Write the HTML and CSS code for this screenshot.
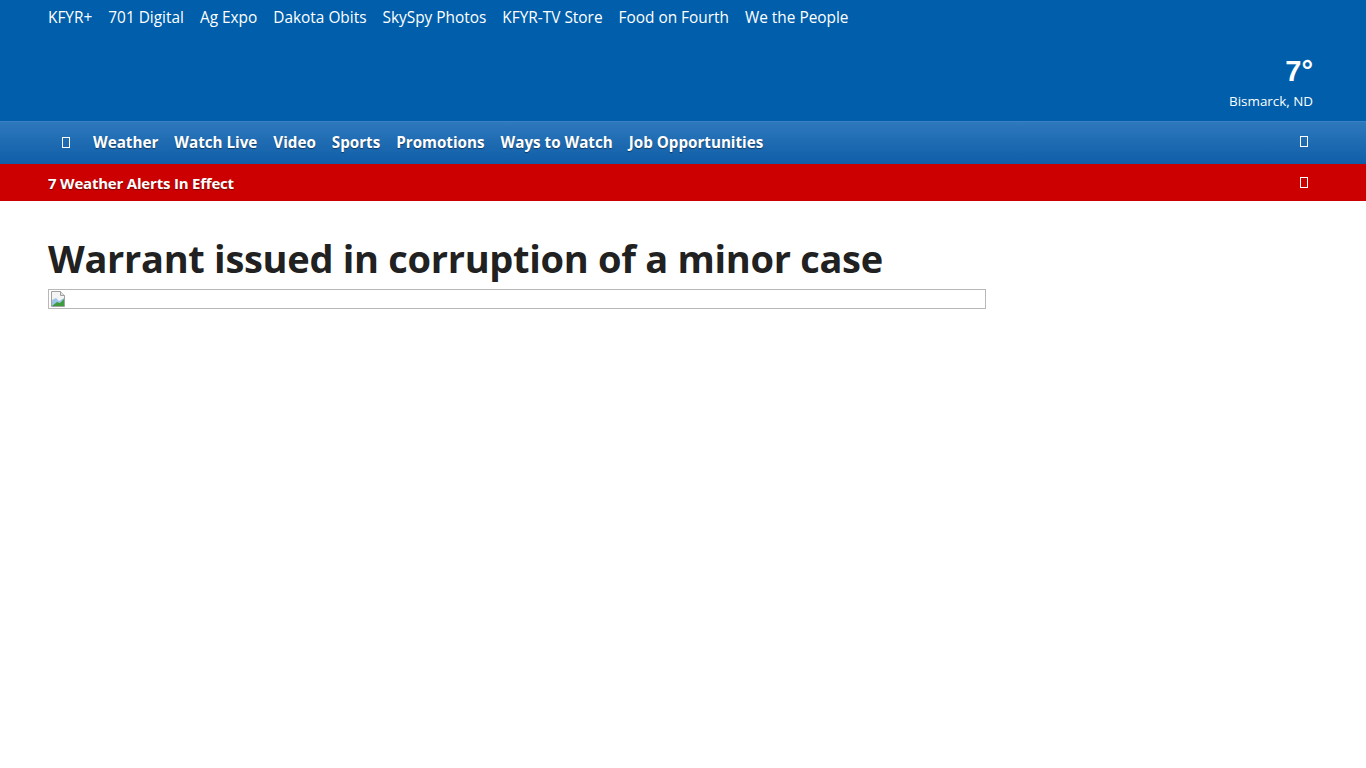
FILE: index.html
```html
<!DOCTYPE html>
<html>
<head>
<meta charset="utf-8">
<link rel="stylesheet" href="styles.css">
</head>
<body>
<header class="masthead">
  <nav class="toplinks">
    <a>KFYR+</a><a>701 Digital</a><a>Ag Expo</a><a>Dakota Obits</a><a>SkySpy Photos</a><a>KFYR-TV Store</a><a>Food on Fourth</a><a>We the People</a>
  </nav>
  <div class="weather">
    <div class="temp">7°</div>
    <div class="city">Bismarck, ND</div>
  </div>
</header>
<nav class="mainnav">
  <div class="navlinks">
    <span class="tofu"></span>
    <a>Weather</a><a>Watch Live</a><a>Video</a><a>Sports</a><a>Promotions</a><a>Ways to Watch</a><a>Job Opportunities</a>
  </div>
  <span class="tofu tofu-right"></span>
</nav>
<div class="alerts">
  <span class="alert-text">7 Weather Alerts In Effect</span>
  <span class="tofu"></span>
</div>
<main class="article">
  <h1>Warrant issued in corruption of a minor case</h1>
  <div class="broken-img">
    <svg width="16" height="16" viewBox="0 0 16 16">
      <path d="M1.5 0.5h9l4 4v11h-13z" fill="#f4f4f4" stroke="#a0a0a0"/>
      <path d="M10.5 0.5v4h4" fill="#e0e0e0" stroke="#a0a0a0"/>
      <path d="M2 9l4 -2 3 3 5 -3v8h-12z" fill="#9cc3e8"/>
      <path d="M2 15l5 -4 3 1 4 -4v7z" fill="#3e9b3e"/>
    </svg>
  </div>
</main>
</body>
</html>
```
FILE: styles.css
```css
html, body { margin: 0; padding: 0; background: #fff; }
body { font-family: "Open Sans", "Noto Sans", sans-serif; }
a { color: inherit; text-decoration: none; }

.masthead {
  background: #005eaa;
  height: 121px;
  padding: 0 53px 0 48px;
  display: flex;
  justify-content: space-between;
  color: #fff;
}
.toplinks {
  display: flex;
  gap: 16px;
  font-size: 15.4px;
  padding-top: 7px;
  height: 22px;
  line-height: 22px;
}
.weather {
  display: flex;
  flex-direction: column;
  align-items: flex-end;
  padding-top: 54px;
}
.temp {
  font-family: "Liberation Sans", Arial, sans-serif;
  font-weight: bold;
  font-size: 29px;
  line-height: 34px;
}
.city {
  font-size: 13.4px;
  line-height: 16px;
  margin-top: 5px;
}

.mainnav {
  height: 43px;
  background: linear-gradient(#2e78bd, #0f5ea8);
  border-top: 1px solid #3b80c2;
  box-sizing: border-box;
  display: flex;
  align-items: center;
  justify-content: space-between;
  padding: 0 58px 2px 62px;
  color: #fff;
}
.navlinks {
  display: flex;
  align-items: center;
  gap: 16px;
  font-weight: bold;
  font-size: 15.2px;
  text-shadow: 0 1px 1px rgba(0,0,0,0.45);
}
.navlinks .tofu { margin-right: 7px; }
.tofu-right { margin-bottom: 2px; }
.tofu {
  display: inline-block;
  width: 6px;
  height: 9px;
  border: 1px solid #fff;
  box-sizing: content-box;
}

.alerts {
  height: 37px;
  background: #cc0000;
  display: flex;
  align-items: center;
  justify-content: space-between;
  padding: 0 58px 0 48px;
  box-sizing: border-box;
  color: #fff;
  font-weight: bold;
  font-size: 15px;
  letter-spacing: -0.2px;
}
.alert-text { text-shadow: 0 1px 1px rgba(0,0,0,0.45); }

.article { padding: 33px 48px 0; }
h1 {
  margin: 0;
  font-size: 38px;
  line-height: 48px;
  font-weight: bold;
  color: #212121;
  letter-spacing: -0.3px;
}
.broken-img {
  width: 935px;
  height: 17px;
  border: 1px solid #b8b8b8;
  margin-top: 7px;
  padding: 1px 0 0 1px;
  box-sizing: content-box;
  display: flex;
}
.broken-img svg { display: block; }
```
